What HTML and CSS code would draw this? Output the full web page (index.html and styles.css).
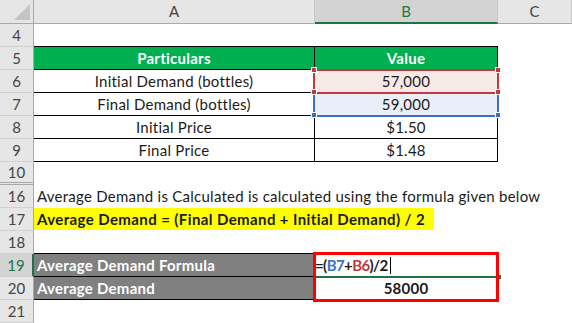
FILE: index.html
```html
<!DOCTYPE html>
<html>
<head>
<meta charset="utf-8">
<link rel="stylesheet" href="styles.css">
</head>
<body>
<div class="sheet">
  <div class="ch corner"><svg class="tri" width="16" height="16" viewBox="0 0 16 16"><polygon points="16,0 16,16 0,16" fill="#c4c4c4"/></svg></div>
  <div class="ch">A</div>
  <div class="ch ch-sel">B</div>
  <div class="ch">C</div>

  <div class="rh">4</div><div class="c bb"></div><div class="c bb"></div><div class="c"></div>

  <div class="rh">5</div><div class="c ca t head">Particulars</div><div class="c cb t head">Value</div><div class="c"></div>

  <div class="rh">6</div><div class="c ca t">Initial Demand (bottles)</div>
  <div class="c cb t pink">57,000
    <div class="rng red"></div>
    <span class="hd hr h-tl"></span><span class="hd hr h-tr"></span><span class="hd hr h-bl"></span><span class="hd hr h-br"></span>
  </div><div class="c"></div>

  <div class="rh">7</div><div class="c ca t">Final Demand (bottles)</div>
  <div class="c cb t bluef">59,000
    <div class="rng blue"></div>
    <span class="hd hb h-bl"></span><span class="hd hb h-br"></span>
  </div><div class="c"></div>

  <div class="rh">8</div><div class="c ca t">Initial Price</div><div class="c cb t">$1.50</div><div class="c"></div>

  <div class="rh">9</div><div class="c ca t">Final Price</div><div class="c cb t">$1.48</div><div class="c"></div>

  <div class="rh rh-hid">10</div><div class="c"></div><div class="c"></div><div class="c"></div>

  <div class="rh">16</div><div class="c span txt">Average Demand is Calculated is calculated using the formula given below</div>

  <div class="rh">17</div><div class="c span"><span class="hl">Average Demand = (Final Demand + Initial Demand) / 2</span></div>

  <div class="rh">18</div><div class="c bb"></div><div class="c bb"></div><div class="c"></div>

  <div class="rh rh-sel">19</div><div class="c ca gray">Average Demand Formula</div>
  <div class="c cb f1"><span class="fx">=(<span class="rb">B7</span>+<span class="rr">B6</span>)/2</span><span class="caret"></span>
    <div class="selline"></div><span class="selh"></span>
    <div class="redbox"></div>
  </div><div class="c"></div>

  <div class="rh">20</div><div class="c ca gray">Average Demand</div><div class="c cb t res">58000</div><div class="c"></div>

  <div class="rh">21</div><div class="c"></div><div class="c"></div><div class="c"></div>
</div>
</body>
</html>
```

FILE: styles.css
```css
* { box-sizing: border-box; }
html, body { margin: 0; padding: 0; background: #fff; }
body { font-family: "Lato", "Liberation Sans", sans-serif; font-size: 15px; color: #1b1b1b; }

.sheet {
  display: grid;
  grid-template-columns: 34px 281px 183px 1fr;
  grid-template-rows: 24px repeat(13, 23px);
  width: 572px;
  height: 323px;
  overflow: hidden;
}

.ch {
  background: #e6e6e6;
  border-right: 1px solid #c8c8c8;
  border-bottom: 1px solid #a8a8a8;
  color: #444;
  text-align: center;
  line-height: 23px;
}
.corner { position: relative; border-right: 1px solid #a8a8a8; }
.tri { position: absolute; right: 3px; bottom: 3px; }
.ch-sel {
  background: #d3d3d3;
  color: #217346;
  border-bottom: 2px solid #217346;
  line-height: 22px;
}

.rh {
  background: #e6e6e6;
  border-right: 1px solid #a8a8a8;
  border-bottom: 1px solid #d0d0d0;
  color: #444;
  text-align: center;
  line-height: 22px;
}
.rh-hid { border-bottom: 3px double #a8a8a8; line-height: 20px; }
.rh-sel { background: #d3d3d3; color: #217346; border-right: 2px solid #217346; }

.c { position: relative; line-height: 22px; white-space: nowrap; letter-spacing: 0.25px; }
.ca { border-right: 1px solid #000; }
.cb { border-right: 1px solid #000; }
.bb { border-bottom: 1px solid #000; }
.t { text-align: center; border-bottom: 1px solid #000; }
.head { background: #00b050; color: #fff; font-weight: 700; }
.pink { background: #f8e9e9; }
.bluef { background: #e9eef8; }

.rng { position: absolute; left: -2px; width: 186px; height: 25px; border: 2px solid; pointer-events: none; }
.red { top: -1px; border-color: #c4383c; z-index: 3; }
.blue { top: -2px; border-color: #3a6fc6; border-top: none; height: 26px; z-index: 2; }
.hd { position: absolute; width: 6px; height: 6px; border: 1px solid #fff; z-index: 4; }
.hr { background: #c4383c; }
.hb { background: #3a6fc6; }
.h-tl { left: -4px; top: -3px; }
.h-tr { right: -4px; top: -3px; }
.h-bl { left: -4px; bottom: -3px; }
.h-br { right: -4px; bottom: -3px; }

.span { grid-column: 2 / 5; overflow: visible; }
.txt { padding-left: 3px; }
.hl { display: inline-block; background: #ffff00; font-weight: 700; letter-spacing: 0.4px; padding: 0 9px 0 3px; height: 22px; }

.gray { background: #808080; color: #fff; font-weight: 700; padding-left: 3px; border-bottom: 1px solid #000; }
.f1 { border-bottom: 1px solid #000; padding-left: 0; font-weight: 700; letter-spacing: 0; }
.fx { vertical-align: top; letter-spacing: -0.6px; }
.rb { color: #3a6fc6; }
.rr { color: #c4383c; }
.caret { display: inline-block; width: 1px; height: 17px; background: #000; margin-left: 2px; vertical-align: top; margin-top: 3px; }
.res { font-weight: 700; }

.selline { position: absolute; left: -1px; right: -3px; bottom: -2px; height: 2px; background: #217346; }
.selh { position: absolute; right: -4px; bottom: -3px; width: 4px; height: 4px; background: #217346; }
.redbox { position: absolute; left: -2px; top: -2px; width: 186px; height: 50px; border: 3px solid #ff0000; z-index: 5; }
```
